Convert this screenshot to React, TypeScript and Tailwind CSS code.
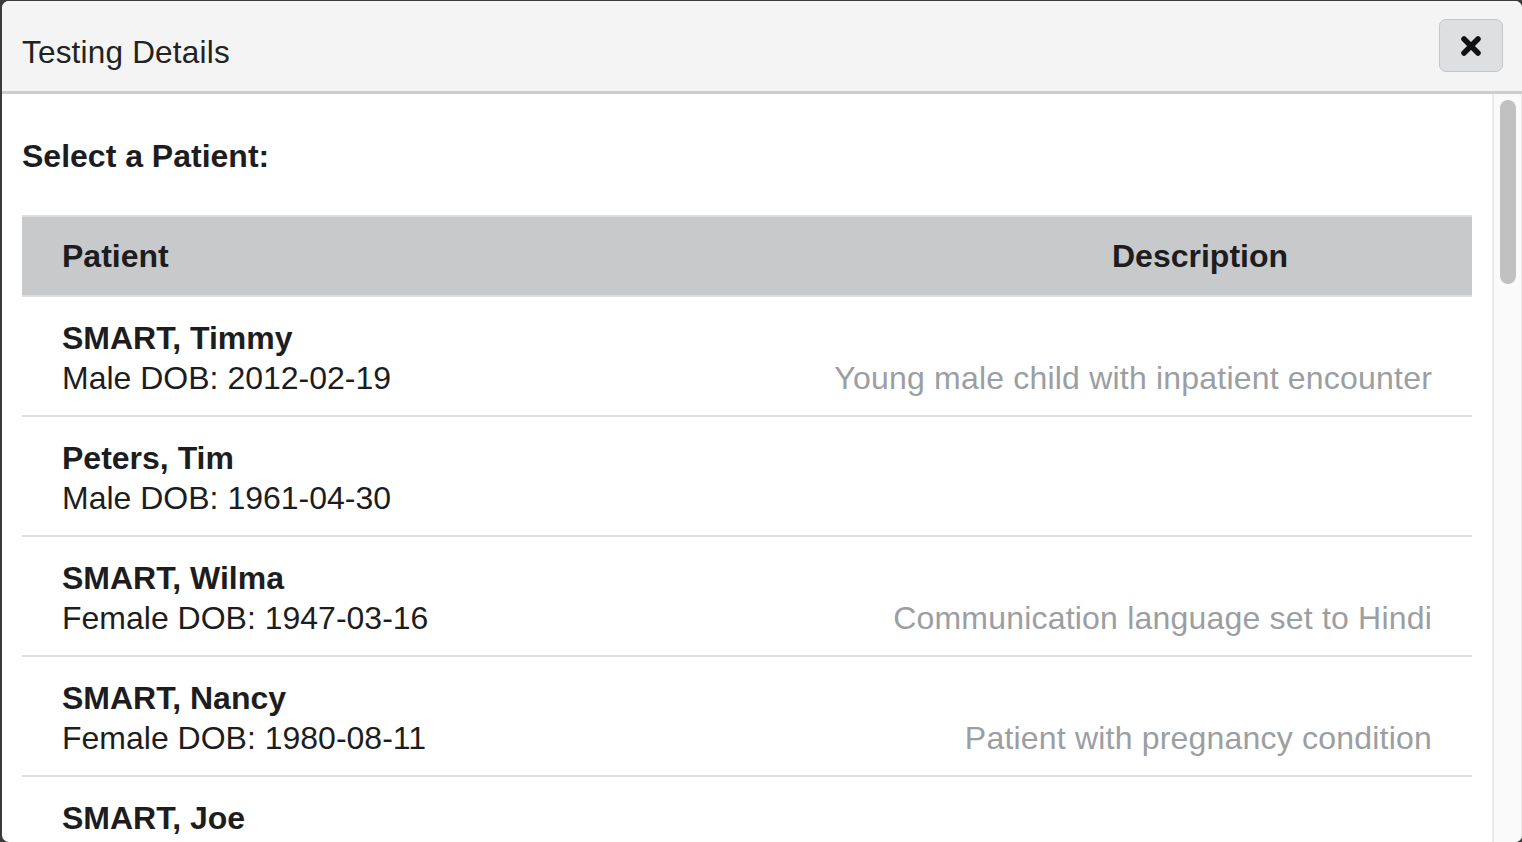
import React from "react";

const rows = [
  { name: "SMART, Timmy", info: "Male DOB: 2012-02-19", desc: "Young male child with inpatient encounter" },
  { name: "Peters, Tim", info: "Male DOB: 1961-04-30", desc: "" },
  { name: "SMART, Wilma", info: "Female DOB: 1947-03-16", desc: "Communication language set to Hindi" },
  { name: "SMART, Nancy", info: "Female DOB: 1980-08-11", desc: "Patient with pregnancy condition" },
  { name: "SMART, Joe", info: "", desc: "" },
];

export default function App() {
  return (
    <div
      className="w-[1522px] h-[842px] bg-[#3b3b3b] overflow-hidden pl-[2px] pt-[1px]"
      style={{ fontFamily: '"Liberation Sans", Arial, Helvetica, sans-serif' }}
    >
      <div className="w-[1520px] h-[841px] bg-white rounded-[7px] overflow-hidden flex flex-col">
        <div className="h-[93px] shrink-0 bg-[#f4f4f4] border-b-[3px] border-[#cdcdcd] flex items-start justify-between pl-[20px] pr-[19px]">
          <div className="text-[31.5px] leading-[40px] text-[#222222] mt-[31px] tracking-[0.2px]">Testing Details</div>
          <button className="w-[64px] h-[53px] mt-[18px] rounded-[7px] bg-[#dedfe1] border border-[#c6c6c6] flex items-center justify-center">
            <svg width="22" height="22" viewBox="0 0 22 22">
              <path d="M4 4 L18 18 M18 4 L4 18" stroke="#111" strokeWidth="5.5" strokeLinecap="round" />
            </svg>
          </button>
        </div>
        <div className="flex-1 flex min-h-0">
          <div className="flex-1 min-w-0 overflow-hidden px-[20px] pt-[42px]">
            <div className="text-[32px] leading-[40px] font-bold text-[#1d1d1f] mb-[39px]">Select a Patient:</div>
            <div className="border-t-2 border-[#dddddd]">
              <div className="grid grid-cols-[1fr_544px] bg-[#c8c9cb] border-b-2 border-[#dddddd] text-[32px] leading-[40px] font-bold text-[#1d1d1f]">
                <div className="px-[40px] py-[19px]">Patient</div>
                <div className="px-[40px] py-[19px] text-center">Description</div>
              </div>
              {rows.map((r) => (
                <div
                  key={r.name}
                  className="grid grid-cols-[1fr_auto] border-b-2 border-[#dddddd] text-[32px] leading-[40px] pt-[21px] pb-[17px] px-[40px]"
                >
                  <div className="text-[#1d1d1f]">
                    <div className="font-bold">{r.name}</div>
                    {r.info && <div>{r.info}</div>}
                  </div>
                  <div className="flex items-end text-right text-[#9b9ea2] tracking-[0.2px]">{r.desc}</div>
                </div>
              ))}
            </div>
          </div>
          <div className="w-[30px] shrink-0 bg-[#fafafa] border-l-2 border-[#e8e8e8] border-r border-r-[#ebebeb] pt-[6px] pl-[6px]">
            <div className="w-[16px] h-[184px] rounded-full bg-[#c1c1c1]"></div>
          </div>
        </div>
      </div>
    </div>
  );
}
